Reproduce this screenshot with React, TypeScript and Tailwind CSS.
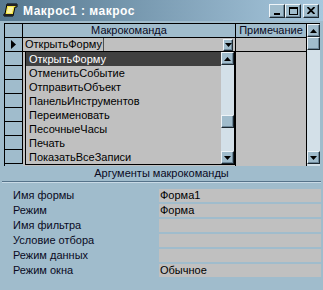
import React from 'react';

const bevel =
  'bg-[#a0bccc] border border-t-[#eef4f8] border-l-[#eef4f8] border-r-[#1c2830] border-b-[#1c2830] shadow-[inset_-1px_-1px_0_#6d8799]';

const items = [
  'ОткрытьФорму',
  'ОтменитьСобытие',
  'ОтправитьОбъект',
  'ПанельИнструментов',
  'Переименовать',
  'ПесочныеЧасы',
  'Печать',
  'ПоказатьВсеЗаписи',
];

const args: [string, string][] = [
  ['Имя формы', 'Форма1'],
  ['Режим', 'Форма'],
  ['Имя фильтра', ''],
  ['Условие отбора', ''],
  ['Режим данных', ''],
  ['Режим окна', 'Обычное'],
];

const Arrow = ({ up }: { up?: boolean }) => (
  <svg width="7" height="4" viewBox="0 0 7 4">
    <polygon points={up ? '3.5,0 7,4 0,4' : '0,0 7,0 3.5,4'} fill="#000" />
  </svg>
);

const ScrollBtn = ({ up }: { up?: boolean }) => (
  <div className={`h-[13px] w-[13px] flex items-center justify-center ${bevel}`}>
    <Arrow up={up} />
  </div>
);

const MacroIcon = () => (
  <svg width="15" height="15" viewBox="0 0 15 15">
    <path d="M4 1 H14 V4 H12 L10 13 H1 V11 H2 Z" fill="#f4e64a" stroke="#000" strokeWidth="1" />
    <rect x="4" y="1" width="10" height="2" fill="#222" />
    <path d="M5 5 H10 M4.5 7 H9.5 M4 9 H9" stroke="#fff" strokeWidth="1" />
    <rect x="1" y="11" width="9" height="2" fill="#222" />
  </svg>
);

const TitleBtn = ({ children, className = '' }: { children: React.ReactNode; className?: string }) => (
  <div className={`w-[16px] h-[14px] flex items-center justify-center ${bevel} ${className}`}>{children}</div>
);

export default function App() {
  return (
    <div className="w-[323px] h-[290px] bg-[#a0bccc] flex flex-col overflow-hidden text-[11px] leading-none text-black font-['Liberation_Sans',Arial,sans-serif]">
      {/* title bar */}
      <div className="h-[21px] flex items-center pl-[3px] pr-[4px] bg-linear-to-r from-[#56788f] to-[#a8c8de]">
        <MacroIcon />
        <span className="ml-[5px] text-white font-bold text-[12px] tracking-[0.5px]">Макрос1 : макрос</span>
        <div className="ml-auto flex items-center">
          <TitleBtn>
            <div className="w-[6px] h-[2px] bg-black mt-[6px] -ml-[1px]" />
          </TitleBtn>
          <TitleBtn>
            <div className="w-[9px] h-[8px] border border-t-2 border-black" />
          </TitleBtn>
          <TitleBtn className="ml-[2px]">
            <svg width="8" height="7" viewBox="0 0 8 7">
              <path d="M0.5 0 L7.5 7 M7.5 0 L0.5 7" stroke="#000" strokeWidth="1.8" />
            </svg>
          </TitleBtn>
        </div>
      </div>

      {/* macro grid */}
      <div className="mt-[2px] ml-[4px] w-[316px] h-[143px] border-l border-t border-black flex relative">
        <div className="w-[302px] flex flex-col">
          <div className="h-[14px] flex border-b border-black">
            <div className="w-[18px] border-r border-black" />
            <div className="w-[213px] border-r border-black flex items-center justify-center text-[#0a0a1e]">Макрокоманда</div>
            <div className="w-[71px] border-r border-black flex items-center justify-center text-[#0a0a1e]">Примечание</div>
          </div>
          <div className="h-[14px] flex border-b border-black">
            <div className="w-[18px] border-r border-black flex items-center justify-center">
              <svg width="5" height="9" viewBox="0 0 5 9">
                <polygon points="0,0 5,4.5 0,9" fill="#000" />
              </svg>
            </div>
            <div className="w-[213px] border-r border-black bg-[#c0c0c0] flex items-center">
              <span className="pl-[2px]">ОткрытьФорму</span>
              <div className="w-px h-[13px] bg-[#505050] ml-[1px]" />
              <div className={`ml-auto mr-[2px] w-[10px] h-[12px] flex items-center justify-center ${bevel}`}>
                <Arrow />
              </div>
            </div>
            <div className="w-[71px] border-r border-black bg-[#c0c0c0]" />
          </div>
          <div className="flex-1 flex">
            <div className="w-[18px] flex flex-col">
              {Array.from({ length: 8 }).map((_, i) => (
                <div key={i} className="h-[14px] border-r border-b border-black shrink-0" />
              ))}
            </div>
            <div className="w-[213px] border-r border-black bg-[#c0c0c0]" />
            <div className="w-[71px] border-r border-black bg-[#c0c0c0]" />
          </div>
        </div>

        {/* grid scrollbar */}
        <div className="w-[13px] flex flex-col bg-[#d3e0e8] pb-[2px]">
          <ScrollBtn up />
          <div className={`h-[13px] w-[13px] ${bevel}`} />
          <div className="flex-1" />
          <ScrollBtn />
        </div>

        {/* open combo list */}
        <div className="absolute left-[20px] top-[27px] w-[211px] h-[114px] border border-r-2 border-black flex bg-[#c0c0c0]">
          <div className="flex-1 flex flex-col">
            {items.map((t, i) => (
              <div
                key={t}
                className={`h-[14px] shrink-0 flex items-center pl-[3px] ${i === 0 ? 'bg-[#404040] text-white' : ''}`}
              >
                {t}
              </div>
            ))}
          </div>
          <div className="w-[13px] flex flex-col bg-[#d3e0e8]">
            <ScrollBtn up />
            <div className="h-[50px]" />
            <div className={`h-[13px] w-[13px] ${bevel}`} />
            <div className="flex-1" />
            <ScrollBtn />
          </div>
        </div>
      </div>

      {/* arguments */}
      <div className="h-[15px] flex items-center justify-center text-[#0a0a1e]">Аргументы макрокоманды</div>
      <div className="mx-[2px] h-[2px] border-t border-t-[#56738a] border-b border-b-[#c8dae6]" />
      <div className="pt-[6px] flex flex-col gap-[2px]">
        {args.map(([label, value]) => (
          <div key={label} className="h-[13px] flex items-center">
            <div className="w-[159px] pl-[13px] text-[#0a0a1e]">{label}</div>
            <div className="w-[162px] h-[13px] bg-[#c0c0c0] flex items-center pl-[1px]">{value}</div>
          </div>
        ))}
      </div>
    </div>
  );
}
